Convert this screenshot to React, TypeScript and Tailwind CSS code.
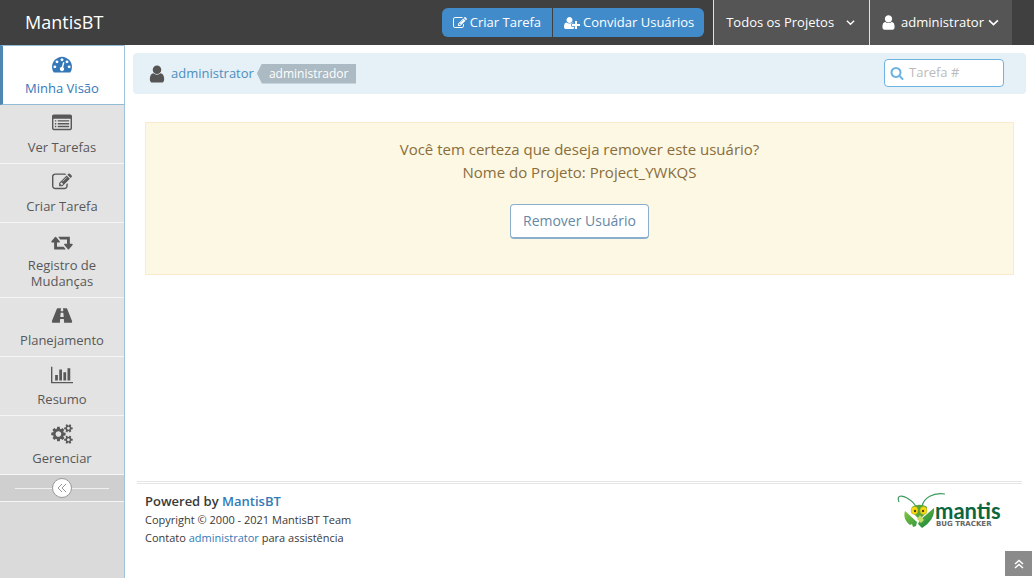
import type { ReactNode } from "react";

const paths = {
  user: { w: 1792, d: "M1536 1399q0 109-62.5 187t-150.5 78h-854q-88 0-150.5-78t-62.5-187q0-85 8.5-160.5t31.5-152 58.5-131 94-89 134.5-34.5q131 128 313 128t313-128q76 0 134.5 34.5t94 89 58.5 131 31.5 152 8.5 160.5zm-256-887q0 159-112.5 271.5t-271.5 112.5-271.5-112.5-112.5-271.5 112.5-271.5 271.5-112.5 271.5 112.5 112.5 271.5z" },
  search: { w: 1792, d: "M1216 832q0-185-131.5-316.5t-316.5-131.5-316.5 131.5-131.5 316.5 131.5 316.5 316.5 131.5 316.5-131.5 131.5-316.5zm512 832q0 52-38 90t-90 38q-54 0-90-38l-343-342q-179 124-399 124-143 0-273.5-55.5t-225-150-150-225-55.5-273.5 55.5-273.5 150-225 225-150 273.5-55.5 273.5 55.5 225 150 150 225 55.5 273.5q0 220-124 399l343 343q37 37 37 90z" },
  edit: { w: 1792, d: "M888 1184l116-116-152-152-116 116v56h96v96h56zm440-720q-16-16-33 1l-350 350q-17 17-1 33t33-1l350-350q17-17 1-33zm80 594v190q0 119-84.5 203.5t-203.5 84.5h-832q-119 0-203.5-84.5t-84.5-203.5v-832q0-119 84.5-203.5t203.5-84.5h832q63 0 117 25 15 7 18 23 3 17-9 29l-49 49q-14 14-32 8-23-6-45-6h-832q-66 0-113 47t-47 113v832q0 66 47 113t113 47h832q66 0 113-47t47-113v-126q0-13 9-22l64-64q15-15 35-7t20 29zm-96-738l288 288-672 672h-288v-288zm444 132l-92 92-288-288 92-92q28-28 68-28t68 28l152 152q28 28 28 68t-28 68z" },
  list: { w: 1792, d: "M256 1152h128v128h-128zM256 896h128v128h-128zM256 640h128v128h-128zM512 1152h1024v128h-1024zM512 896h1024v128h-1024zM512 640h1024v128h-1024zM1664 1376v-832q0-13-9.500-22.500t-22.500-9.500h-1472q-13 0-22.500 9.500t-9.500 22.500v832q0 13 9.500 22.500t22.500 9.500h1472q13 0 22.500-9.500t9.500-22.500zM1792 288v1088q0 66-47 113t-113 47h-1472q-66 0-113-47t-47-113v-1088q0-66 47-113t113-47h1472q66 0 113 47t47 113z" },
  retweet: { w: 1920, d: "M1280 1632q0 13-9.5 22.5t-22.5 9.5h-960q-8 0-13.5-2t-9-7-5.5-8-3-11.5-1-11.5v-600h-192q-26 0-45-19t-19-45q0-24 15-41l320-384q19-22 49-22t49 22l320 384q15 17 15 41 0 26-19 45t-45 19h-192v384h576q16 0 25 11l160 192q7 10 7 21zm640-416q0 24-15 41l-320 384q-20 23-49 23t-49-23l-320-384q-15-17-15-41 0-26 19-45t45-19h192v-384h-576q-16 0-25-12l-160-192q-7-9-7-20 0-13 9.5-22.5t22.5-9.5h960q8 0 13.5 2t9 7 5.5 8 3 11.5 1 11.5v600h192q26 0 45 19t19 45z" },
  road: { w: 1920, d: "M1111 966v-4l-24-320q-1-13-11-22.5t-23-9.5h-186q-13 0-23 9.5t-11 22.5l-24 320v4q-1 12 8 20t21 8h244q12 0 21-8t8-20zm759 452q0 73-46 73h-704q13 0 22-9.5t8-22.5l-20-256q-1-13-11-22.5t-23-9.5h-272q-13 0-23 9.5t-11 22.5l-20 256q-1 13 8 22.5t22 9.5h-704q-46 0-46-73 0-54 26-116l417-1044q8-19 26-33t38-14h339q-13 0-23 9.5t-11 22.5l-15 192q-1 14 8 23t22 9h166q13 0 22-9t8-23l-15-192q-1-13-11-22.5t-23-9.5h339q20 0 38 14t26 33l417 1044q26 62 26 116z" },
  chart: { w: 2048, d: "M640 896v512h-256v-512h256zm384-512v1024h-256v-1024h256zm1024 1152v128h-2048v-1536h128v1408h1920zm-640-896v768h-256v-768h256zm384-384v1152h-256v-1152h256z" },
  gauge: { w: 1792, d: "M384 1152q0-53-37.5-90.5t-90.5-37.5-90.5 37.5-37.5 90.5 37.5 90.5 90.5 37.5 90.5-37.5 37.5-90.5zm192-448q0-53-37.5-90.5t-90.5-37.5-90.5 37.5-37.5 90.5 37.5 90.5 90.5 37.5 90.5-37.5 37.5-90.5zm428 481l101-382q6-26-7.5-48.5t-38.5-29.5-48 6.5-30 39.5l-101 382q-60 5-107 43.5t-63 98.5q-20 77 20 146t117 89 146-20 89-117q16-60-6-117t-72-91zm660-33q0-53-37.5-90.5t-90.5-37.5-90.5 37.5-37.5 90.5 37.5 90.5 90.5 37.5 90.5-37.5 37.5-90.5zm-640-640q0-53-37.5-90.5t-90.5-37.5-90.5 37.5-37.5 90.5 37.5 90.5 90.5 37.5 90.5-37.5 37.5-90.5zm448 192q0-53-37.5-90.5t-90.5-37.5-90.5 37.5-37.5 90.5 37.5 90.5 90.5 37.5 90.5-37.5 37.5-90.5zm320 448q0 261-141 483-19 29-54 29h-1402q-35 0-54-29-141-221-141-483 0-182 71-348t191-286 286-191 348-71 348 71 286 191 191 286 71 348z" },
  cogs: { w: 1920, d: "M896 896q0-106-75-181t-181-75-181 75-75 181 75 181 181 75 181-75 75-181zm768 512q0-52-38-90t-90-38-90 38-38 90q0 53 37.5 90.5t90.5 37.5 90.5-37.5 37.5-90.5zm0-1024q0-52-38-90t-90-38-90 38-38 90q0 53 37.5 90.5t90.5 37.5 90.5-37.5 37.5-90.5zm-384 421v185q0 10-7 19.5t-16 10.5l-155 24q-11 35-32 76 34 48 90 115 7 11 7 20 0 12-7 19-23 30-82.5 89.5t-78.5 59.5q-11 0-21-7l-115-90q-37 19-77 31-11 108-23 155-7 24-30 24h-186q-11 0-20-7.5t-10-17.5l-23-153q-34-10-75-31l-118 89q-7 7-20 7-11 0-21-8-144-133-144-160 0-9 7-19 10-14 41-53t47-61q-23-44-35-82l-152-24q-10-1-17-9.5t-7-19.5v-185q0-10 7-19.5t16-10.5l155-24q11-35 32-76-34-48-90-115-7-11-7-20 0-12 7-20 22-30 82-89t79-59q11 0 21 7l115 90q34-18 77-32 11-108 23-154 7-24 30-24h186q11 0 20 7.5t10 17.5l23 153q34 10 75 31l118-89q8-7 20-7 11 0 21 8 144 133 144 160 0 9-7 19-12 16-42 54t-45 60q23 48 34 82l152 23q10 2 17 10.5t7 19.5zm640 533v140q0 16-149 31-12 27-30 52 51 113 51 138 0 4-4 7-122 71-124 71-8 0-46-47t-52-68q-20 2-30 2t-30-2q-14 21-52 68t-46 47q-2 0-124-71-4-3-4-7 0-25 51-138-18-25-30-52-149-15-149-31v-140q0-16 149-31 13-29 30-52-51-113-51-138 0-4 4-7 4-2 35-20t59-34 30-16q8 0 46 46.5t52 67.5q20-2 30-2t30 2q51-71 92-112l6-2q4 0 124 70 4 3 4 7 0 25-51 138 17 23 30 52 149 15 149 31zm0-1024v140q0 16-149 31-12 27-30 52 51 113 51 138 0 4-4 7-122 71-124 71-8 0-46-47t-52-68q-20 2-30 2t-30-2q-14 21-52 68t-46 47q-2 0-124-71-4-3-4-7 0-25 51-138-18-25-30-52-149-15-149-31v-140q0-16 149-31 13-29 30-52-51-113-51-138 0-4 4-7 4-2 35-20t59-34 30-16q8 0 46 46.5t52 67.5q20-2 30-2t30 2q51-71 92-112l6-2q4 0 124 70 4 3 4 7 0 25-51 138 17 23 30 52 149 15 149 31z" },
  userPlus: { w: 2048, d: "M704 896q-159 0-271.5-112.5t-112.5-271.5 112.5-271.5 271.5-112.5 271.5 112.5 112.5 271.5-112.5 271.5-271.5 112.5zm960 128h352q13 0 22.5 9.5t9.5 22.5v192q0 13-9.5 22.5t-22.5 9.5h-352v352q0 13-9.5 22.5t-22.5 9.5h-192q-13 0-22.5-9.5t-9.5-22.5v-352h-352q-13 0-22.5-9.5t-9.5-22.5v-192q0-13 9.5-22.5t22.5-9.5h352v-352q0-13 9.5-22.5t22.5-9.5h192q13 0 22.5 9.5t9.5 22.5v352zm-736 224q0 52 38 90t90 38h256v238q-68 50-171 50h-874q-121 0-194-69t-73-190q0-53 3.5-103.5t14-109 26.5-108.500 43-97.5 62-81 85.5-53.5 111.5-20q19 0 39 17 79 61 154.5 91.5t164.5 30.5 164.5-30.5 154.5-91.5q20-17 39-17 132 0 217 96h-223q-52 0-90 38t-38 90v192z" },
};

type IconName = keyof typeof paths;

function Icon({ name, className }: { name: IconName; className: string }) {
  const { w, d } = paths[name];
  return (
    <svg viewBox={`0 0 ${w} 1792`} className={className} fill="currentColor" fillRule={name === "list" ? "evenodd" : undefined} aria-hidden="true">
      <path d={d} />
    </svg>
  );
}

function Chevron({ className }: { className: string }) {
  return (
    <svg viewBox="0 0 10 10" className={className} fill="none" stroke="currentColor" aria-hidden="true">
      <path d="M1 3l4 4 4-4" />
    </svg>
  );
}

const menu: { icon: IconName; label: string; active?: boolean }[] = [
  { icon: "gauge", label: "Minha Visão", active: true },
  { icon: "list", label: "Ver Tarefas" },
  { icon: "edit", label: "Criar Tarefa" },
  { icon: "retweet", label: "Registro de Mudanças" },
  { icon: "road", label: "Planejamento" },
  { icon: "chart", label: "Resumo" },
  { icon: "cogs", label: "Gerenciar" },
];

function NavButton({ children, className }: { children: ReactNode; className: string }) {
  return (
    <button type="button" className={`flex h-full items-center border-l border-[#e1e1e1] bg-[#555] text-white ${className}`}>
      {children}
    </button>
  );
}

function Header() {
  return (
    <header className="flex h-[45px] shrink-0 items-center bg-[#404040] pr-[22px] text-white">
      <a href="#" className="ml-[25px] pb-0.5 text-lg">MantisBT</a>
      <div className="mr-[9px] ml-auto flex gap-px">
        <a href="#" className="flex h-[29px] items-center gap-[3px] rounded-l-md bg-[#428bca] px-[11px]">
          <Icon name="edit" className="size-[14px]" />
          Criar Tarefa
        </a>
        <a href="#" className="flex h-[29px] items-center gap-[3px] rounded-r-md bg-[#428bca] pr-[10px] pl-[11px]">
          <Icon name="userPlus" className="h-[14px] w-4" />
          Convidar Usuários
        </a>
      </div>
      <NavButton className="gap-3 pr-[14px] pl-3">
        Todos os Projetos
        <Chevron className="size-[9px] stroke-[1.5]" />
      </NavButton>
      <NavButton className="gap-1 pr-[13px] pl-[10px]">
        <Icon name="user" className="size-[17px]" />
        administrator
        <Chevron className="size-[11px] stroke-[1.5]" />
      </NavButton>
    </header>
  );
}

function Sidebar() {
  return (
    <nav className="w-[125px] shrink-0 border-r border-[#9fc3dc] bg-[#dadada]">
      {menu.map((item) => (
        <a
          key={item.label}
          href="#"
          className={
            item.active
              ? "flex flex-col items-center border-y border-l-[3px] border-[#92bcd6] border-l-[#4f86b2] bg-white py-2 pr-[3px] text-[#3478b8]"
              : "flex flex-col items-center border-b border-[#f5f5f5] bg-[#e3e3e3] px-4 py-2 text-[#585858]"
          }
        >
          <Icon name={item.icon} className="h-5 w-[22px]" />
          <span className="mt-1.5 text-center leading-4">{item.label}</span>
        </a>
      ))}
      <div className="flex h-[27px] items-center border-b border-[#f5f5f5] bg-[#cfcfcf] px-[15px]">
        <span className="h-px flex-1 bg-[#f0f0f0]" />
        <button type="button" aria-label="Recolher menu" className="flex size-5 items-center justify-center rounded-full border border-[#999] bg-white text-[#999]">
          <svg viewBox="0 0 10 10" className="size-[10px]" fill="none" stroke="currentColor" aria-hidden="true">
            <path d="M5 1L1 5l4 4M9 1L5 5l4 4" />
          </svg>
        </button>
        <span className="h-px flex-1 bg-[#f0f0f0]" />
      </div>
    </nav>
  );
}

function Logo() {
  return (
    <svg viewBox="0 0 104 38" className="mr-[13px] h-[38px] w-[104px]" role="img" aria-label="Mantis Bug Tracker">
      <defs>
        <linearGradient id="leaf" x1="0" y1="0" x2="1" y2="1">
          <stop offset="0" stopColor="#8ccb40" />
          <stop offset="1" stopColor="#12833f" />
        </linearGradient>
      </defs>
      <path d="M2 11C-1 4 5 4 10 7c5 3 8 6 9 9M25 15c2-8 11-14 23-12" fill="none" stroke="#3c9a5c" strokeWidth="1.200" />
      <path d="M8 20l12 11-1 4-3 1-1-3-2 1C9 31 6 26 8 20zM37 17c1 8-4 15-12 20l-4-4 2-4z" fill="url(#leaf)" />
      <path d="M15 16c4-3 11-3 15 0 0 5-3 9-7.500 12-4.500-3-7.500-7-7.500-12z" fill="#55a63a" />
      <path d="M20 28l3-4 4 5-3 3z" fill="#c4df63" />
      <ellipse cx="17.500" cy="19.500" rx="3.500" ry="4" fill="#f4dc13" stroke="#a9a51b" strokeWidth=".5" />
      <ellipse cx="26.500" cy="19.500" rx="3.500" ry="4" fill="#f4dc13" stroke="#a9a51b" strokeWidth=".5" />
      <circle cx="18" cy="20" r="1.200" fill="#533f12" />
      <circle cx="26" cy="20" r="1.200" fill="#533f12" />
      <text x="38" y="28" fontSize="22" fontWeight="700" fill="#0c6640" className="font-[Lato]">mantis</text>
      <text x="39" y="35" fontSize="7" fontWeight="700" fill="#666" className="font-['DejaVu_Sans']">BUG TRACKER</text>
    </svg>
  );
}

export default function App() {
  return (
    <div className="flex min-h-screen flex-col bg-white font-['Open_Sans',sans-serif] text-[13px] text-[#393939]">
      <Header />
      <div className="flex flex-1">
        <Sidebar />
        <div className="flex min-w-0 flex-1 flex-col">
          <div className="mx-2 mt-2 flex h-[41px] items-center rounded bg-[#e5f0f7] pr-[22px] pl-[14px]">
            <Icon name="user" className="size-5 text-[#555]" />
            <a href="#" className="ml-1 text-[#4c8fbd]">administrator</a>
            <span className="ml-[3px] flex h-5 items-center bg-[#abbac3] pr-2 pl-3 text-xs text-white [clip-path:polygon(5px_0,100%_0,100%_100%,5px_100%,0_50%)]">administrador</span>
            <label className="mb-0.5 ml-auto flex h-7 w-[120px] items-center gap-[5px] rounded border border-[#6fb3e0] bg-white pl-[5px] text-[#6fb3e0]">
              <Icon name="search" className="size-[14px] shrink-0" />
              <input type="text" aria-label="Tarefa #" placeholder="Tarefa #" className="w-full min-w-0 bg-transparent text-[13px] text-[#393939] outline-none placeholder:text-[#bbb]" />
            </label>
          </div>
          <main className="mx-5 mt-7 flex flex-col items-center border border-[#faebcc] bg-[#fcf8e3] pt-[15px] pb-[35px] text-center text-[15px] leading-[23px] text-[#8a6d3b]">
            <p>Você tem certeza que deseja remover este usuário?</p>
            <p>Nome do Projeto: Project_YWKQS</p>
            <button type="button" className="mt-5 h-[35px] rounded border border-b-2 border-[#8aafce] bg-white px-3 text-sm text-[#6688a6]">Remover Usuário</button>
          </main>
          <footer className="mx-3 mt-auto flex h-[97px] items-start justify-between border-t-[3px] border-double border-[#e5e5e5] px-2 pt-[7px]">
            <div>
              <p className="text-[13px] leading-5 font-semibold">Powered by <a href="#" className="text-[#337ab7]">MantisBT</a></p>
              <p className="text-[11px] leading-[18px]">Copyright © 2000 - 2021 MantisBT Team</p>
              <p className="text-[11px] leading-[18px]">Contato <a href="#" className="text-[#337ab7]">administrator</a> para assistência</p>
            </div>
            <Logo />
          </footer>
        </div>
      </div>
      <a href="#" aria-label="Voltar ao topo" className="fixed right-[2px] bottom-[2px] flex h-[25px] w-[27px] items-center justify-center bg-[#8b8b8b] text-white">
        <svg viewBox="0 0 10 10" className="size-[10px] stroke-[1.5]" fill="none" stroke="currentColor" aria-hidden="true">
          <path d="M1 5l4-3.500L9 5M1 9l4-3.500L9 9" />
        </svg>
      </a>
    </div>
  );
}
